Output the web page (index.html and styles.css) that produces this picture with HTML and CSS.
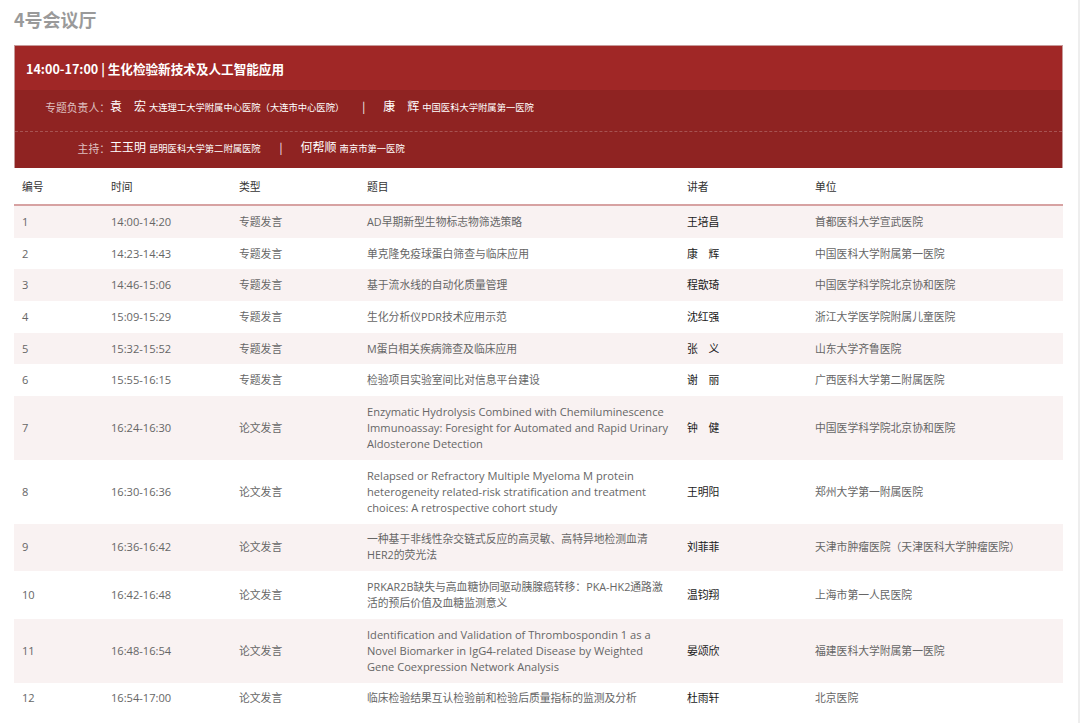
FILE: index.html
```html
<!DOCTYPE html>
<html lang="zh-CN">
<head>
<meta charset="utf-8">
<title>4号会议厅</title>
<link rel="stylesheet" href="styles.css">
</head>
<body>
<div class="page">
  <h2 class="hall">4号会议厅</h2>
  <section class="session">
    <div class="session-head">
      <div class="session-title">14:00-17:00 | 生化检验新技术及人工智能应用</div>
      <div class="role role-first">
        <span class="role-label">专题负责人：</span>
        <span class="role-people">
          <span class="pname">袁　宏</span><span class="porg">大连理工大学附属中心医院（大连市中心医院）</span>
          <span class="sep">|</span>
          <span class="pname">康　辉</span><span class="porg">中国医科大学附属第一医院</span>
        </span>
      </div>
      <div class="role role-second">
        <span class="role-label">主持：</span>
        <span class="role-people">
          <span class="pname">王玉明</span><span class="porg">昆明医科大学第二附属医院</span>
          <span class="sep">|</span>
          <span class="pname">何帮顺</span><span class="porg">南京市第一医院</span>
        </span>
      </div>
    </div>
    <table class="agenda">
      <colgroup>
        <col class="c-no"><col class="c-time"><col class="c-type"><col class="c-topic"><col class="c-speaker"><col class="c-org">
      </colgroup>
      <thead>
        <tr><th>编号</th><th>时间</th><th>类型</th><th>题目</th><th>讲者</th><th>单位</th></tr>
      </thead>
      <tbody>
        <tr><td class="lat">1</td><td class="lat">14:00-14:20</td><td>专题发言</td><td>AD早期新型生物标志物筛选策略</td><td class="spk">王培昌</td><td>首都医科大学宣武医院</td></tr>
        <tr><td class="lat">2</td><td class="lat">14:23-14:43</td><td>专题发言</td><td>单克隆免疫球蛋白筛查与临床应用</td><td class="spk">康　辉</td><td>中国医科大学附属第一医院</td></tr>
        <tr><td class="lat">3</td><td class="lat">14:46-15:06</td><td>专题发言</td><td>基于流水线的自动化质量管理</td><td class="spk">程歆琦</td><td>中国医学科学院北京协和医院</td></tr>
        <tr><td class="lat">4</td><td class="lat">15:09-15:29</td><td>专题发言</td><td>生化分析仪PDR技术应用示范</td><td class="spk">沈红强</td><td>浙江大学医学院附属儿童医院</td></tr>
        <tr><td class="lat">5</td><td class="lat">15:32-15:52</td><td>专题发言</td><td>M蛋白相关疾病筛查及临床应用</td><td class="spk">张　义</td><td>山东大学齐鲁医院</td></tr>
        <tr><td class="lat">6</td><td class="lat">15:55-16:15</td><td>专题发言</td><td>检验项目实验室间比对信息平台建设</td><td class="spk">谢　丽</td><td>广西医科大学第二附属医院</td></tr>
        <tr><td class="lat">7</td><td class="lat">16:24-16:30</td><td>论文发言</td><td class="lat">Enzymatic Hydrolysis Combined with Chemiluminescence Immunoassay: Foresight for Automated and Rapid Urinary Aldosterone Detection</td><td class="spk">钟　健</td><td>中国医学科学院北京协和医院</td></tr>
        <tr><td class="lat">8</td><td class="lat">16:30-16:36</td><td>论文发言</td><td class="lat">Relapsed or Refractory Multiple Myeloma M protein heterogeneity related-risk stratification and treatment choices: A retrospective cohort study</td><td class="spk">王明阳</td><td>郑州大学第一附属医院</td></tr>
        <tr><td class="lat">9</td><td class="lat">16:36-16:42</td><td>论文发言</td><td>一种基于非线性杂交链式反应的高灵敏、高特异地检测血清HER2的荧光法</td><td class="spk">刘菲菲</td><td>天津市肿瘤医院（天津医科大学肿瘤医院）</td></tr>
        <tr><td class="lat">10</td><td class="lat">16:42-16:48</td><td>论文发言</td><td>PRKAR2B缺失与高血糖协同驱动胰腺癌转移：PKA-HK2通路激活的预后价值及血糖监测意义</td><td class="spk">温钧翔</td><td>上海市第一人民医院</td></tr>
        <tr><td class="lat">11</td><td class="lat">16:48-16:54</td><td>论文发言</td><td class="lat">Identification and Validation of Thrombospondin 1 as a Novel Biomarker in IgG4-related Disease by Weighted Gene Coexpression Network Analysis</td><td class="spk">晏颂欣</td><td>福建医科大学附属第一医院</td></tr>
        <tr><td class="lat">12</td><td class="lat">16:54-17:00</td><td>论文发言</td><td>临床检验结果互认检验前和检验后质量指标的监测及分析</td><td class="spk">杜雨轩</td><td>北京医院</td></tr>
      </tbody>
    </table>
  </section>
</div>
</body>
</html>
```

FILE: styles.css
```css
* { box-sizing: border-box; }
html, body { margin: 0; padding: 0; background: #fff; }
body {
  font-family: "Open Sans", "Noto Sans CJK SC", sans-serif;
  color: #666;
}
.page {
  padding: 6px 15px 0 14px;
  border-right: 2px solid #eeeeee;
  min-height: 723px;
}
.hall {
  margin: 0 0 13px;
  font-size: 18px;
  line-height: 26px;
  font-weight: 700;
  color: #9a9a9a;
  font-family: "Noto Sans CJK SC", sans-serif;
}
.session-head {
  background: #8f2322;
  color: #fff;
  border: 1px solid #c79a9a;
  border-bottom: none;
  font-family: "Noto Sans CJK SC", sans-serif;
}
.session-title {
  background: #a02726;
  height: 44px;
  padding: 0 11px;
  display: flex;
  align-items: center;
  font-size: 12.6px;
  font-weight: 700;
}
.role {
  display: grid;
  grid-template-columns: 95px 1fr;
  align-items: center;
  line-height: 16px;
}
.role-first {
  padding: 8px 0 16px;
  border-bottom: 1px dashed rgba(255, 255, 255, 0.22);
}
.role-second {
  padding: 7px 0 12px;
}
.role-label {
  text-align: right;
  font-size: 10.8px;
  color: rgba(255, 255, 255, 0.72);
}
.role-people {
  display: flex;
  align-items: baseline;
}
.pname {
  font-size: 12px;
  font-weight: 400;
}
.porg {
  font-size: 9.3px;
  margin-left: 3px;
}
.sep {
  font-size: 11px;
  margin: 0 18px 0 18px;
}
.role-second .sep { margin: 0 18px 0 19px; }

.agenda {
  width: 100%;
  border-collapse: collapse;
  table-layout: fixed;
  font-size: 10.8px;
}
.c-no { width: 89px; }
.c-time { width: 128px; }
.c-type { width: 128px; }
.c-topic { width: 320px; }
.c-speaker { width: 128px; }
.c-org { width: 256px; }
.agenda th {
  text-align: left;
  font-weight: 400;
  color: #333;
  height: 37px;
  padding: 0 8px;
  border-bottom: 2px solid #d7a2a2;
  font-size: 10.8px;
}
.agenda td {
  padding: 7.85px 8px;
  line-height: 16px;
  vertical-align: middle;
}
.agenda td.lat { font-size: 11.1px; }
.agenda tbody tr:nth-child(odd) { background: #f9f2f2; }
.agenda td.spk { color: #1a1a1a; font-weight: 400; }
```
